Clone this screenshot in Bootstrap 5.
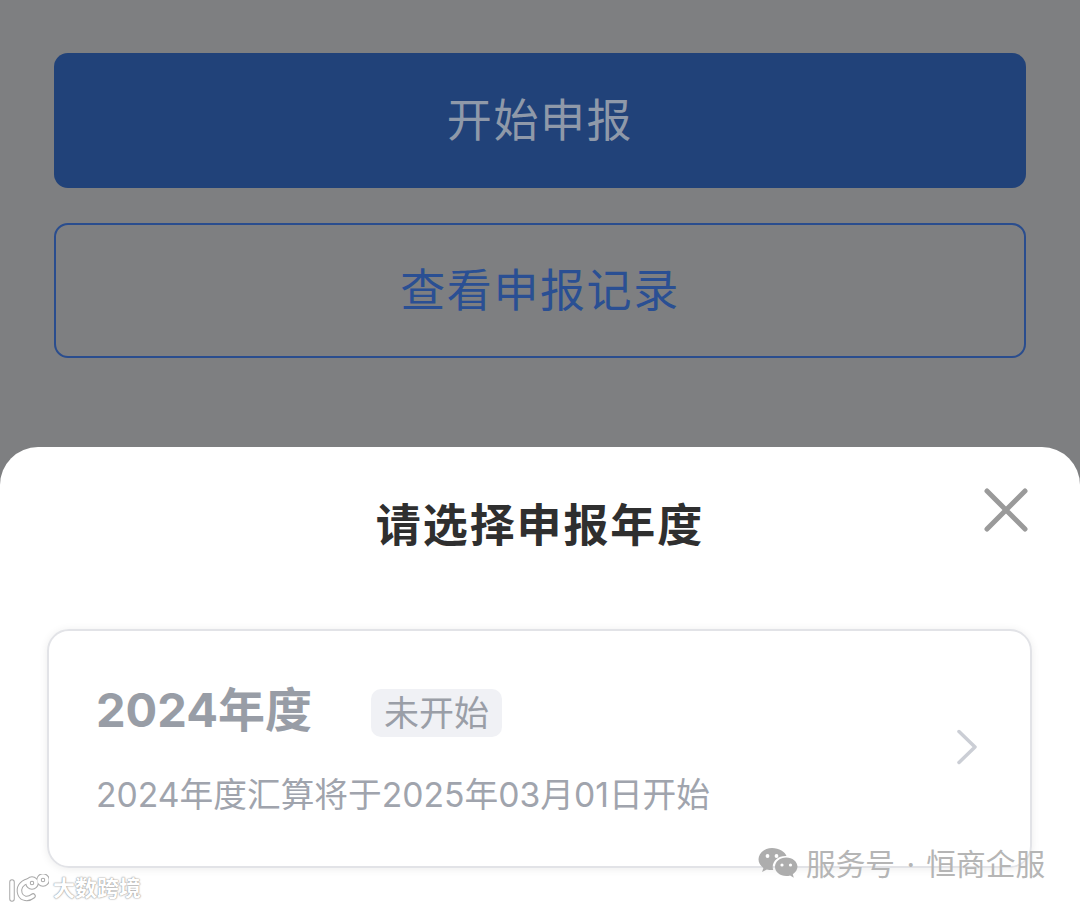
<!DOCTYPE html>
<html lang="zh-CN">
<head>
  <meta charset="UTF-8">
  <meta name="viewport" content="width=device-width, initial-scale=1">
  <title>请选择申报年度</title>
  <link href="https://cdn.jsdelivr.net/npm/bootstrap@5.3.0/dist/css/bootstrap.min.css" rel="stylesheet">
  <style>
    body {
      width: 1080px;
      height: 908px;
      overflow: hidden;
      background: #fff;
      font-family: "Inter", "Noto Sans CJK SC", sans-serif;
    }
    .page-shell { position: relative; height: 908px; background: #7e7f81; }
    .top-actions { padding: 53px 54px 0; height: 447px; gap: 35px; }
    .action-btn {
      height: 135px;
      border-radius: 14px;
      font-size: 45px;
      line-height: 1;
      letter-spacing: 1.6px;
    }
    .action-solid { background: #214279; border: 0; color: #8f99a9; }
    .action-line { background: transparent; border: 2px solid #2a4d8e; color: #2a4f93; }
    .year-sheet {
      height: 461px;
      background: #fff;
      border-radius: 38px 38px 0 0;
      padding: 0 48px;
    }
    .sheet-head { height: 182px; padding-top: 50px; position: relative; }
    .sheet-title { font-size: 45px; line-height: 58px; font-weight: 700; color: #2f2f2f; letter-spacing: 1.9px; margin: 0; }
    .close-icon { position: absolute; right: 4px; top: 41px; }
    .year-card {
      height: 239px;
      margin-left: -1px;
      border: 2px solid #e2e3e7;
      border-radius: 22px;
      box-shadow: 0 1px 9px rgba(0, 0, 0, .08);
      padding: 50px 52px 0 47px;
    }
    .year-name { font-size: 47px; line-height: 58px; font-weight: 700; color: #989da6; width: 275px; }
    .year-tag {
      background: #f0f1f5;
      color: #9a9ea7;
      font-size: 35px;
      line-height: 48px;
      border-radius: 10px;
      padding: 0 13px;
      margin-top: 8px;
    }
    .year-note { font-size: 33.7px; line-height: 44px; color: #a0a4ad; margin-top: 34px; white-space: nowrap; }
    .wx-mark {
      position: absolute;
      left: 758px;
      top: 846px;
      color: #b5b5b5;
      font-size: 29.7px;
      line-height: 36px;
      gap: 8px;
      word-spacing: 3px;
      white-space: nowrap;
    }
    .brand-mark {
      position: absolute;
      left: 9px;
      top: 874px;
      gap: 4px;
      color: #fff;
      font-size: 22px;
      line-height: 28px;
      font-weight: 700;
      text-shadow: 0 0 2px #9a9a9a, 0 0 1px #8a8a8a;
      white-space: nowrap;
    }
  </style>
</head>

<body>
  <div class="page-shell d-flex flex-column">
    <div class="top-actions d-flex flex-column">
      <button class="btn action-btn action-solid d-flex align-items-center justify-content-center">开始申报</button>
      <button class="btn action-btn action-line d-flex align-items-center justify-content-center">查看申报记录</button>
    </div>

    <div class="year-sheet">
      <div class="sheet-head text-center">
        <h1 class="sheet-title">请选择申报年度</h1>
        <svg class="close-icon" width="44" height="44" viewBox="0 0 44 44" fill="none" stroke="#9a9a9a" stroke-width="5" stroke-linecap="round">
          <path d="M3 3L41 41M41 3L3 41"/>
        </svg>
      </div>

      <div class="year-card d-flex align-items-start justify-content-between">
        <div>
          <div class="d-flex align-items-start">
            <div class="year-name">2024年度</div>
            <span class="year-tag">未开始</span>
          </div>
          <div class="year-note">2024年度汇算将于2025年03月01日开始</div>
        </div>
        <svg class="mt-5" width="22" height="36" viewBox="0 0 22 36" fill="none" stroke="#cbced5" stroke-width="3.5" stroke-linecap="round" stroke-linejoin="round">
          <path d="M3 2.500L19 18L3 33.500"/>
        </svg>
      </div>
    </div>

    <div class="wx-mark d-flex align-items-center">
      <svg width="40" height="34" viewBox="0 0 40 34">
        <path fill="#adadad" d="M14 1C6.500 1 .5 6 .5 12.300c0 3.500 1.900 6.500 4.900 8.600l-1.300 4 4.700-2.500c1.700.5 3.400.7 5.200.7h1.200a10.500 10.500 0 0 1-.5-3c0-6.200 5.700-11 12.700-11h1.100C27.200 4.800 21.200 1 14 1z"/>
        <path fill="#adadad" d="M39.500 19.800c0-5.200-5.100-9.300-11.200-9.300-6.300 0-11.300 4.100-11.300 9.300s5 9.300 11.300 9.300c1.300 0 2.600-.2 3.800-.6l3.700 2.200-1-3.400c3-2 4.700-4.800 4.700-8z"/>
        <circle cx="9.500" cy="9" r="1.900" fill="#fff"/><circle cx="18.500" cy="9" r="1.900" fill="#fff"/>
        <circle cx="24" cy="18" r="1.600" fill="#fff"/><circle cx="32.500" cy="18" r="1.600" fill="#fff"/>
      </svg>
      <span>服务号 · 恒商企服</span>
    </div>

    <div class="brand-mark d-flex align-items-center">
      <svg width="40" height="28" viewBox="0 0 40 28" fill="none" stroke="#fff" stroke-width="3.500" stroke-linecap="round">
        <g stroke="#a8a8a8" stroke-width="5.500">
          <path d="M3 8v17M19 7C12 9 9 14 11 20c2 5 8 6 13 2"/>
          <circle cx="23" cy="9" r="4"/><circle cx="34" cy="6" r="4"/>
        </g>
        <path d="M3 8v17M19 7C12 9 9 14 11 20c2 5 8 6 13 2"/>
        <circle cx="23" cy="9" r="4"/><circle cx="34" cy="6" r="4"/>
      </svg>
      <span>大数跨境</span>
    </div>
  </div>

  <script src="https://cdn.jsdelivr.net/npm/bootstrap@5.3.0/dist/js/bootstrap.bundle.min.js"></script>
</body>
</html>
